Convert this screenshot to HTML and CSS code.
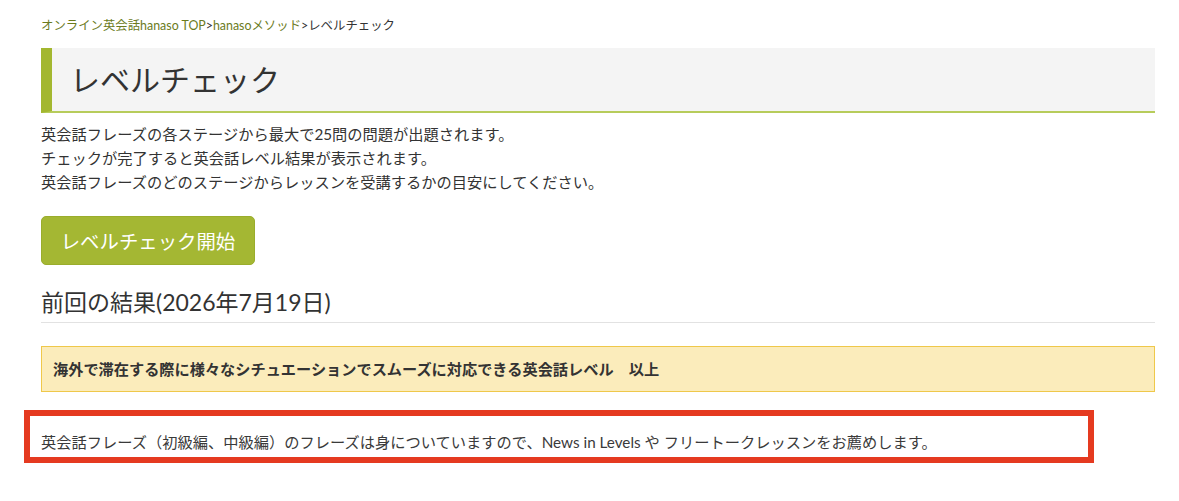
FILE: index.html
```html
<!DOCTYPE html>
<html lang="ja">
<head>
<meta charset="utf-8">
<title>レベルチェック</title>
<link rel="stylesheet" href="styles.css">
</head>
<body>
<div class="page">
  <nav class="crumbs"><a href="#">オンライン英会話hanaso TOP</a>&gt;<a href="#">hanasoメソッド</a>&gt;<span>レベルチェック</span></nav>
  <h1 class="title">レベルチェック</h1>
  <p class="intro">英会話フレーズの各ステージから最大で25問の問題が出題されます。<br>チェックが完了すると英会話レベル結果が表示されます。<br>英会話フレーズのどのステージからレッスンを受講するかの目安にしてください。</p>
  <button class="start">レベルチェック開始</button>
  <h2 class="result-head">前回の結果(2026年7月19日)</h2>
  <div class="result-box">海外で滞在する際に様々なシチュエーションでスムーズに対応できる英会話レベル　以上</div>
  <p class="advice">英会話フレーズ（初級編、中級編）のフレーズは身についていますので、News in Levels や フリートークレッスンをお薦めします。</p>
</div>
</body>
</html>
```
FILE: styles.css
```css
html, body {
  margin: 0;
  padding: 0;
  background: #fff;
}
body {
  font-family: Lato, "Noto Sans CJK JP", sans-serif;
  color: #333;
}
.page {
  width: 1114px;
  padding: 18px 0 0 41px;
}
.crumbs {
  font-size: 12.4px;
  line-height: 16px;
  color: #333;
  margin-bottom: 14px;
}
.crumbs a {
  color: #6b7b1c;
  text-decoration: none;
}
.title {
  margin: 0;
  height: 63px;
  box-sizing: content-box;
  background: #f4f4f4;
  border-left: 11px solid #a3b72f;
  border-bottom: 2px solid #b7cc5b;
  font-size: 30px;
  font-weight: normal;
  line-height: 63px;
  padding-left: 18px;
  color: #333;
}
.intro {
  margin: 9px 0 0;
  font-size: 15.25px;
  line-height: 24px;
}
.start {
  display: block;
  margin-top: 22px;
  width: 214px;
  height: 49px;
  background: #a4b733;
  border: 1px solid #9aad2c;
  border-radius: 5px;
  color: #fff;
  font-family: Lato, "Noto Sans CJK JP", sans-serif;
  font-size: 19.4px;
  padding: 0;
  text-align: center;
}
.result-head {
  margin: 22px 0 0;
  font-size: 23px;
  font-weight: normal;
  line-height: 30px;
  padding-bottom: 5px;
  border-bottom: 1px solid #e2e2e2;
}
.result-box {
  margin-top: 23px;
  background: #fbecbb;
  border: 1px solid #efc84a;
  font-size: 15.2px;
  font-weight: bold;
  line-height: 22px;
  padding: 11px 11px;
}
.advice {
  margin: 18px 0 0 -17px;
  width: 1047px;
  border: 6px solid #e53a20;
  font-size: 15.25px;
  line-height: 24px;
  padding: 14px 0 3px 11px;
  color: #3a3a3a;
}
```
